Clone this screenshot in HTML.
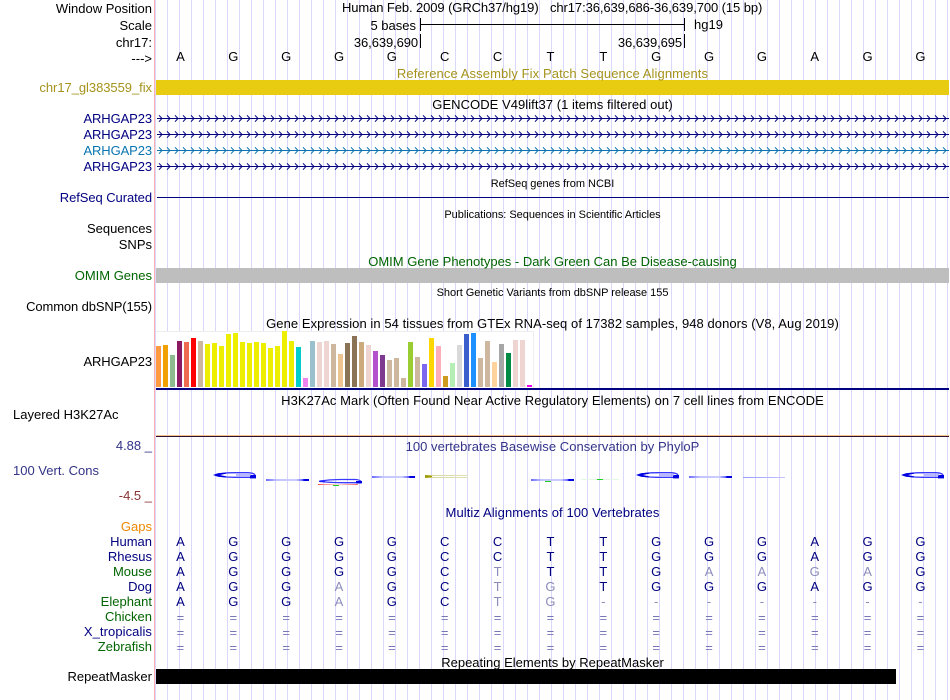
<!DOCTYPE html>
<html lang="en">
<head>
<meta charset="utf-8">
<title>Genome Browser</title>
<style>
html,body{margin:0;padding:0;background:#fff;}
#p{position:relative;width:950px;height:700px;overflow:hidden;background:#fff;font-family:"Liberation Sans",sans-serif;font-size:13px;color:#000;}
#grid{position:absolute;left:155px;top:0;width:794px;height:700px;background-image:linear-gradient(to right,#d9d8fb 1px,transparent 1px);background-size:12px 100%;}
#red{position:absolute;left:154px;top:0;width:1px;height:700px;background:#ffb0b0;}
.b{position:absolute;}
.l,.c,.t{position:absolute;white-space:nowrap;line-height:14px;height:14px;}
.l{right:798px;text-align:right;}
.c{left:155px;width:795px;text-align:center;}
.s{font-size:11px;letter-spacing:-.03px;}
.n{color:#000080;}
.g{color:#006400;}
.y{color:#a5931c;}
.v{color:#333388;}
.r{position:absolute;left:154px;width:793px;display:flex;line-height:14px;height:14px;text-align:center;}
.r span{flex:1 1 0;}
.n2{color:#000080;}
.r i{font-style:normal;color:#8c8cbc;}
.e{color:#7777b8;}
svg{position:absolute;left:0;top:0;}
</style>
</head>
<body>
<div id="p">
<div id="grid"></div>
<div id="red"></div>

<div class="b" style="left:156px;top:80px;width:793px;height:15px;background:#e8cc12"></div>
<div class="b" style="left:156px;top:268px;width:793px;height:15px;background:#bebebe"></div>
<div class="b" style="left:156px;top:669px;width:740px;height:15px;background:#000"></div>
<div class="b" style="left:156px;top:331px;width:378px;height:57px;background:#fff;box-sizing:border-box;border-top:1px solid #eee;border-right:1px solid #eee"></div>
<div class="b" style="left:156px;top:388px;width:793px;height:2px;background:#000080"></div>
<div class="b" style="left:156px;top:435px;width:793px;height:1px;background:#f0c48a"></div>
<div class="b" style="left:156px;top:436px;width:793px;height:1px;background:#301030"></div>

<svg width="950" height="700" viewBox="0 0 950 700">
<defs>
<pattern id="pa" patternUnits="userSpaceOnUse" x="157" y="114.5" width="8" height="8"><path d="M2 0.8L5 4L2 7.2" fill="none" stroke="#000080" stroke-width="1"/></pattern>
<pattern id="pb" patternUnits="userSpaceOnUse" x="157" y="114.5" width="8" height="8"><path d="M2 0.8L5 4L2 7.2" fill="none" stroke="#0a75b0" stroke-width="1"/></pattern>
<linearGradient id="lb"><stop offset="0" stop-color="#6a6aff"/><stop offset=".25" stop-color="#c4c4ff"/><stop offset=".7" stop-color="#ccccff"/><stop offset=".85" stop-color="#6a6aff"/><stop offset=".88" stop-color="#0000e0"/><stop offset="1" stop-color="#0000e0"/></linearGradient>
<linearGradient id="lc"><stop offset="0" stop-color="#9a9aff"/><stop offset="1" stop-color="#c4c4ff"/></linearGradient>
<linearGradient id="lo"><stop offset="0" stop-color="#a09a00"/><stop offset=".2" stop-color="#d8d8a0"/><stop offset="1" stop-color="#e2e2b8"/></linearGradient>
<linearGradient id="lr"><stop offset="0" stop-color="#ff5050"/><stop offset=".2" stop-color="#ff9090"/><stop offset=".5" stop-color="#ffd8d8"/><stop offset=".8" stop-color="#ff9090"/><stop offset="1" stop-color="#ff7070"/></linearGradient>
</defs>

<!-- scale -->
<path d="M420.5 18V31M684.5 18V31M420.5 34V48M684.5 34V48" stroke="#000" stroke-width="1" fill="none"/>
<rect x="420" y="24" width="265" height="1" fill="#000"/>

<!-- gene lines -->
<rect x="157" y="114" width="792" height="9" fill="url(#pa)"/>
<rect x="157" y="118" width="792" height="1" fill="#000080"/>
<rect x="157" y="130" width="792" height="9" fill="url(#pa)"/>
<rect x="157" y="134" width="792" height="1" fill="#000080"/>
<rect x="157" y="146" width="792" height="9" fill="url(#pb)"/>
<rect x="157" y="150" width="792" height="1" fill="#0a75b0"/>
<rect x="157" y="162" width="792" height="9" fill="url(#pa)"/>
<rect x="157" y="166" width="792" height="1" fill="#000080"/>
<rect x="157" y="197" width="792" height="1" fill="#000080"/>

<!-- GTEx bars -->
<g>
<rect x="156" y="346" width="5" height="41" fill="#ff9a40"/>
<rect x="163" y="345" width="5" height="42" fill="#f0a000"/>
<rect x="170" y="355" width="5" height="32" fill="#8fbc8f"/>
<rect x="177" y="341" width="5" height="46" fill="#8b1a62"/>
<rect x="184" y="342" width="5" height="45" fill="#ee6a50"/>
<rect x="191" y="338" width="5" height="49" fill="#ff0000"/>
<rect x="198" y="341" width="5" height="46" fill="#cdb79e"/>
<rect x="205" y="344" width="5" height="43" fill="#eeee00"/>
<rect x="212" y="343" width="5" height="44" fill="#eeee00"/>
<rect x="219" y="346" width="5" height="41" fill="#eeee00"/>
<rect x="226" y="334" width="5" height="53" fill="#eeee00"/>
<rect x="233" y="333" width="5" height="54" fill="#eeee00"/>
<rect x="240" y="342" width="5" height="45" fill="#eeee00"/>
<rect x="247" y="343" width="5" height="44" fill="#eeee00"/>
<rect x="254" y="342" width="5" height="45" fill="#eeee00"/>
<rect x="261" y="343" width="5" height="44" fill="#eeee00"/>
<rect x="268" y="348" width="5" height="39" fill="#eeee00"/>
<rect x="275" y="346" width="5" height="41" fill="#eeee00"/>
<rect x="282" y="331" width="5" height="56" fill="#eeee00"/>
<rect x="289" y="341" width="5" height="46" fill="#eeee00"/>
<rect x="296" y="347" width="5" height="40" fill="#00cdcd"/>
<rect x="303" y="378" width="5" height="9" fill="#ee82ee"/>
<rect x="310" y="341" width="5" height="46" fill="#9ac0cd"/>
<rect x="317" y="342" width="5" height="45" fill="#eed5d2"/>
<rect x="324" y="341" width="5" height="46" fill="#eed5d2"/>
<rect x="331" y="344" width="5" height="43" fill="#cdb79e"/>
<rect x="338" y="354" width="5" height="33" fill="#eec591"/>
<rect x="345" y="343" width="5" height="44" fill="#8b7355"/>
<rect x="352" y="336" width="5" height="51" fill="#8b7355"/>
<rect x="359" y="342" width="5" height="45" fill="#cdaa7d"/>
<rect x="366" y="345" width="5" height="42" fill="#eed5d2"/>
<rect x="373" y="351" width="5" height="36" fill="#b452cd"/>
<rect x="380" y="355" width="5" height="32" fill="#7d3a8f"/>
<rect x="387" y="360" width="5" height="27" fill="#cdb79e"/>
<rect x="394" y="358" width="5" height="29" fill="#cdb79e"/>
<rect x="401" y="378" width="5" height="9" fill="#cdb79e"/>
<rect x="408" y="342" width="5" height="45" fill="#9acd32"/>
<rect x="415" y="357" width="5" height="30" fill="#cdb79e"/>
<rect x="422" y="364" width="5" height="23" fill="#7b68ee"/>
<rect x="429" y="338" width="5" height="49" fill="#ffd700"/>
<rect x="436" y="346" width="5" height="41" fill="#ffaeb9"/>
<rect x="443" y="376" width="5" height="11" fill="#cd9b1d"/>
<rect x="450" y="363" width="5" height="24" fill="#b4eeb4"/>
<rect x="457" y="345" width="5" height="42" fill="#d9d9d9"/>
<rect x="464" y="334" width="5" height="53" fill="#3a5fcd"/>
<rect x="471" y="333" width="5" height="54" fill="#1e90ff"/>
<rect x="478" y="358" width="5" height="29" fill="#cdb79e"/>
<rect x="485" y="341" width="5" height="46" fill="#cdb79e"/>
<rect x="492" y="362" width="5" height="25" fill="#ffd39b"/>
<rect x="499" y="344" width="5" height="43" fill="#a6a6a6"/>
<rect x="506" y="353" width="5" height="34" fill="#008b45"/>
<rect x="513" y="340" width="5" height="47" fill="#eed5d2"/>
<rect x="520" y="340" width="5" height="47" fill="#eed5d2"/>
<rect x="527" y="385" width="5" height="2" fill="#ee00ee"/>
</g>

<!-- conservation -->
<g>
<path d="M215 475Q222 472.7 234 472.7L248 472.7Q254 473 255 475M215 475Q222 477.3 234 477.3L255 477.3" fill="none" stroke="#3a3aff" stroke-width="1.3"/>
<path d="M213 475L218 473.2L226 472.6V473.6L220 475L226 476.4V477.4L218 476.8Z" fill="#0000e0"/><rect x="250" y="475" width="6" height="3.4" fill="#0000e0"/>
<rect x="236" y="474.4" width="15" height="1.2" fill="#8a8aff"/>

<path d="M638 475Q645 472.7 657 472.7L671 472.7Q677 473 678 475M638 475Q645 477.3 657 477.3L678 477.3" fill="none" stroke="#3a3aff" stroke-width="1.3"/>
<path d="M636 475L641 473.2L649 472.6V473.6L643 475L649 476.4V477.4L641 476.8Z" fill="#0000e0"/><rect x="673" y="475" width="6" height="3.4" fill="#0000e0"/>
<rect x="659" y="474.4" width="15" height="1.2" fill="#8a8aff"/>

<path d="M903 475Q910 472.7 922 472.7L936 472.7Q942 473 943 475M903 475Q910 477.3 922 477.3L943 477.3" fill="none" stroke="#3a3aff" stroke-width="1.3"/>
<path d="M901 475L906 473.2L914 472.6V473.6L908 475L914 476.4V477.4L906 476.8Z" fill="#0000e0"/><rect x="938" y="475" width="6" height="3.4" fill="#0000e0"/>
<rect x="924" y="474.4" width="15" height="1.2" fill="#8a8aff"/>

<rect x="266" y="479" width="43" height="2" fill="url(#lb)"/>

<path d="M320 481Q330 479.5 340 479.5L356 479.5Q360 480 361 481.5M320 481.5Q330 482.7 345 482.7L361 482.7" fill="none" stroke="#3a3aff" stroke-width="1.3"/>
<rect x="356" y="481" width="6" height="2.4" fill="#0000e0"/><rect x="319" y="480.6" width="6" height="1.4" fill="#2020ff"/>
<rect x="318" y="484" width="40" height="1" fill="url(#lr)"/>
<rect x="333" y="485" width="6" height="1" fill="#20d020"/>

<rect x="372" y="476" width="43" height="2" fill="url(#lb)"/>

<rect x="425" y="475" width="43" height="1" fill="url(#lo)"/>
<rect x="425" y="477" width="43" height="1" fill="url(#lo)"/>
<rect x="425" y="476" width="7" height="1" fill="#a09a00"/>

<rect x="531" y="479" width="43" height="2" fill="url(#lb)"/>
<rect x="545" y="481" width="6" height="1" fill="#20d020"/>

<rect x="581" y="479" width="38" height="1" fill="#e4f6e4"/>
<rect x="597" y="479" width="6" height="1" fill="#20d020"/>

<rect x="689" y="476" width="43" height="2" fill="url(#lb)"/>
<rect x="743" y="477" width="42" height="1" fill="url(#lc)"/>
</g>
</svg>

<!-- Labels -->
<div class="l" style="top:2px">Window Position</div>
<div class="l" style="top:19px">Scale</div>
<div class="l" style="top:36px">chr17:</div>
<div class="l" style="top:52px">---&gt;</div>
<div class="l y" style="top:81px;letter-spacing:-.05px">chr17_gl383559_fix</div>
<div class="l n" style="top:112px;letter-spacing:-.1px">ARHGAP23</div>
<div class="l n" style="top:128px;letter-spacing:-.1px">ARHGAP23</div>
<div class="l" style="top:144px;color:#0a75b0;letter-spacing:-.1px">ARHGAP23</div>
<div class="l n" style="top:160px;letter-spacing:-.1px">ARHGAP23</div>
<div class="l n" style="top:191px;letter-spacing:-.07px">RefSeq Curated</div>
<div class="l" style="top:222px">Sequences</div>
<div class="l" style="top:238px">SNPs</div>
<div class="l g" style="top:269px">OMIM Genes</div>
<div class="l" style="top:300px;letter-spacing:-.12px">Common dbSNP(155)</div>
<div class="l" style="top:355px;letter-spacing:-.1px">ARHGAP23</div>
<div class="t" style="left:13px;top:408px">Layered H3K27Ac</div>
<div class="l v" style="top:439px">4.88 _</div>
<div class="t v" style="left:13px;top:464px">100 Vert. Cons</div>
<div class="l" style="top:489px;color:#8b3333">-4.5 _</div>
<div class="l" style="top:520px;color:#ee8800">Gaps</div>
<div class="l n" style="top:535px">Human</div>
<div class="l n" style="top:550px">Rhesus</div>
<div class="l g" style="top:565px">Mouse</div>
<div class="l n" style="top:580px">Dog</div>
<div class="l g" style="top:595px">Elephant</div>
<div class="l g" style="top:610px">Chicken</div>
<div class="l n" style="top:625px;letter-spacing:.08px">X_tropicalis</div>
<div class="l g" style="top:640px">Zebrafish</div>
<div class="l" style="top:670px">RepeatMasker</div>

<!-- Header text -->
<div class="t" style="left:342px;top:1px;letter-spacing:-.1px">Human Feb. 2009 (GRCh37/hg19)</div>
<div class="t" style="left:550px;top:1px;letter-spacing:-.09px">chr17:36,639,686-36,639,700 (15 bp)</div>
<div class="t" style="right:534px;top:19px">5 bases</div>
<div class="t" style="left:694px;top:18px">hg19</div>
<div class="t" style="right:532px;top:36px;letter-spacing:-.1px">36,639,690</div>
<div class="t" style="right:268px;top:36px;letter-spacing:-.1px">36,639,695</div>

<!-- Track titles -->
<div class="c y" style="top:67px;letter-spacing:.1px">Reference Assembly Fix Patch Sequence Alignments</div>
<div class="c" style="top:98px;letter-spacing:.05px">GENCODE V49lift37 (1 items filtered out)</div>
<div class="c s" style="top:177px">RefSeq genes from NCBI</div>
<div class="c s" style="top:208px">Publications: Sequences in Scientific Articles</div>
<div class="c g" style="top:255px">OMIM Gene Phenotypes - Dark Green Can Be Disease-causing</div>
<div class="c s" style="top:286px">Short Genetic Variants from dbSNP release 155</div>
<div class="c" style="top:317px;letter-spacing:.06px">Gene Expression in 54 tissues from GTEx RNA-seq of 17382 samples, 948 donors (V8, Aug 2019)</div>
<div class="c" style="top:394px;letter-spacing:.06px">H3K27Ac Mark (Often Found Near Active Regulatory Elements) on 7 cell lines from ENCODE</div>
<div class="c v" style="top:440px;letter-spacing:.04px">100 vertebrates Basewise Conservation by PhyloP</div>
<div class="c n" style="top:506px;letter-spacing:.08px">Multiz Alignments of 100 Vertebrates</div>
<div class="c" style="top:656px">Repeating Elements by RepeatMasker</div>

<!-- Sequence rows -->
<div class="r" style="top:50px"><span>A</span><span>G</span><span>G</span><span>G</span><span>G</span><span>C</span><span>C</span><span>T</span><span>T</span><span>G</span><span>G</span><span>G</span><span>A</span><span>G</span><span>G</span></div>
<div class="r n2" style="top:535px"><span>A</span><span>G</span><span>G</span><span>G</span><span>G</span><span>C</span><span>C</span><span>T</span><span>T</span><span>G</span><span>G</span><span>G</span><span>A</span><span>G</span><span>G</span></div>
<div class="r n2" style="top:550px"><span>A</span><span>G</span><span>G</span><span>G</span><span>G</span><span>C</span><span>C</span><span>T</span><span>T</span><span>G</span><span>G</span><span>G</span><span>A</span><span>G</span><span>G</span></div>
<div class="r n2" style="top:565px"><span>A</span><span>G</span><span>G</span><span>G</span><span>G</span><span>C</span><span><i>T</i></span><span>T</span><span>T</span><span>G</span><span><i>A</i></span><span><i>A</i></span><span><i>G</i></span><span><i>A</i></span><span>G</span></div>
<div class="r n2" style="top:580px"><span>A</span><span>G</span><span>G</span><span><i>A</i></span><span>G</span><span>C</span><span><i>T</i></span><span><i>G</i></span><span>T</span><span>G</span><span>G</span><span>G</span><span>A</span><span>G</span><span>G</span></div>
<div class="r n2" style="top:595px"><span>A</span><span>G</span><span>G</span><span><i>A</i></span><span>G</span><span>C</span><span><i>T</i></span><span><i>G</i></span><span><i>-</i></span><span><i>-</i></span><span><i>-</i></span><span><i>-</i></span><span><i>-</i></span><span><i>-</i></span><span><i>-</i></span></div>
<div class="r e" style="top:611px"><span>=</span><span>=</span><span>=</span><span>=</span><span>=</span><span>=</span><span>=</span><span>=</span><span>=</span><span>=</span><span>=</span><span>=</span><span>=</span><span>=</span><span>=</span></div>
<div class="r e" style="top:626px"><span>=</span><span>=</span><span>=</span><span>=</span><span>=</span><span>=</span><span>=</span><span>=</span><span>=</span><span>=</span><span>=</span><span>=</span><span>=</span><span>=</span><span>=</span></div>
<div class="r e" style="top:641px"><span>=</span><span>=</span><span>=</span><span>=</span><span>=</span><span>=</span><span>=</span><span>=</span><span>=</span><span>=</span><span>=</span><span>=</span><span>=</span><span>=</span><span>=</span></div>
</div>
</body>
</html>
